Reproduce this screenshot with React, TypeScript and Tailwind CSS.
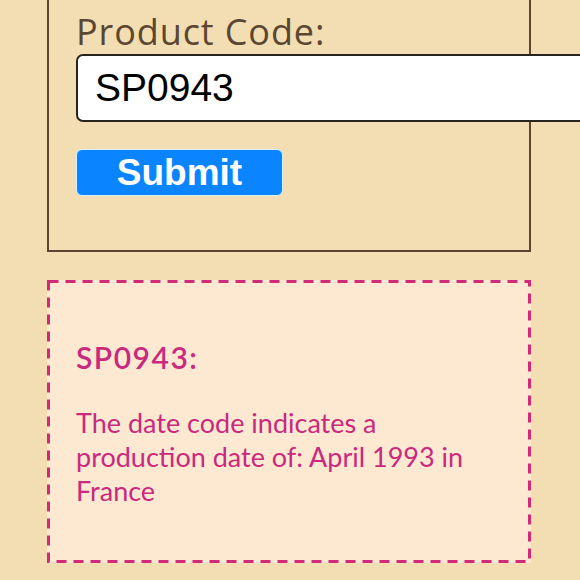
export default function App() {
  return (
    <div className="w-[580px] h-[580px] overflow-hidden bg-[#f3deb3]">
      <div className="pl-[47px] -mt-[20px]">
        <div className="w-[484px] border-2 border-[#5b4631] pl-[27px] pt-[30px] pb-[54px]">
          <label
            className="block text-[36px] leading-[40px] text-[#5b4631] tracking-[0.9px]"
            style={{ fontFamily: "'Open Sans', sans-serif" }}
          >
            Product Code:
          </label>
          <div className="mt-[2px] w-[560px] h-[68px] bg-white border-2 border-[#2a2420] rounded-[7px] flex items-center pl-[17px]">
            <span
              className="text-[39px] leading-[40px] text-black"
              style={{ fontFamily: "'Liberation Sans', Arial, sans-serif" }}
            >
              SP0943
            </span>
          </div>
          <button
            className="mt-[27px] w-[207px] h-[47px] bg-[#0a84ff] border border-[#d9f2ff] rounded-[6px] flex items-center justify-center text-white font-bold text-[37px] leading-[40px]"
            style={{ fontFamily: "'Liberation Sans', Arial, sans-serif" }}
          >
            Submit
          </button>
        </div>
        <div
          className="relative mt-[28px] w-[484px] h-[283px] bg-[#fde9d2] pl-[29px] pt-[60px] text-[#c92a7d]"
          style={{ fontFamily: "Lato, sans-serif" }}
        >
          <svg
            className="absolute inset-0 pointer-events-none"
            width="484"
            height="283"
            viewBox="0 0 484 283"
          >
            <rect
              x="1.5"
              y="1.5"
              width="481"
              height="280"
              fill="none"
              stroke="#d02a78"
              strokeWidth="3"
              strokeDasharray="10 7"
            />
          </svg>
          <div className="text-[30px] leading-[34px] font-semibold tracking-[1.5px]">SP0943:</div>
          <p className="mt-[32px] w-[400px] text-[27px] leading-[34px]">
            The date code indicates a production date of: April 1993 in France
          </p>
        </div>
      </div>
    </div>
  );
}
